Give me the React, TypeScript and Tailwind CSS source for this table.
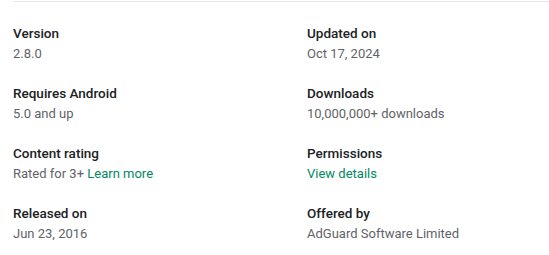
import React from "react";

const items: { label: string; value: React.ReactNode }[] = [
  { label: "Version", value: "2.8.0" },
  { label: "Updated on", value: "Oct 17, 2024" },
  { label: "Requires Android", value: "5.0 and up" },
  { label: "Downloads", value: "10,000,000+ downloads" },
  {
    label: "Content rating",
    value: (
      <>
        Rated for 3+ <a className="text-[#01875f]">Learn more</a>
      </>
    ),
  },
  { label: "Permissions", value: <a className="text-[#01875f]">View details</a> },
  { label: "Released on", value: "Jun 23, 2016" },
  { label: "Offered by", value: "AdGuard Software Limited" },
];

export default function App() {
  return (
    <div className="w-[549px] h-[255px] bg-white pt-px font-['Roboto',sans-serif] leading-[20px]">
      <div className="ml-[13px] border-t border-[#e8eaed]" />
      <div className="grid grid-cols-[294px_1fr] gap-y-[19px] pl-[13px] pt-[21px]">
        {items.map((it) => (
          <div key={it.label}>
            <div className="text-[#202124] text-[13.5px] font-medium">{it.label}</div>
            <div className="text-[#5f6368] text-[13px] pt-px">{it.value}</div>
          </div>
        ))}
      </div>
    </div>
  );
}
